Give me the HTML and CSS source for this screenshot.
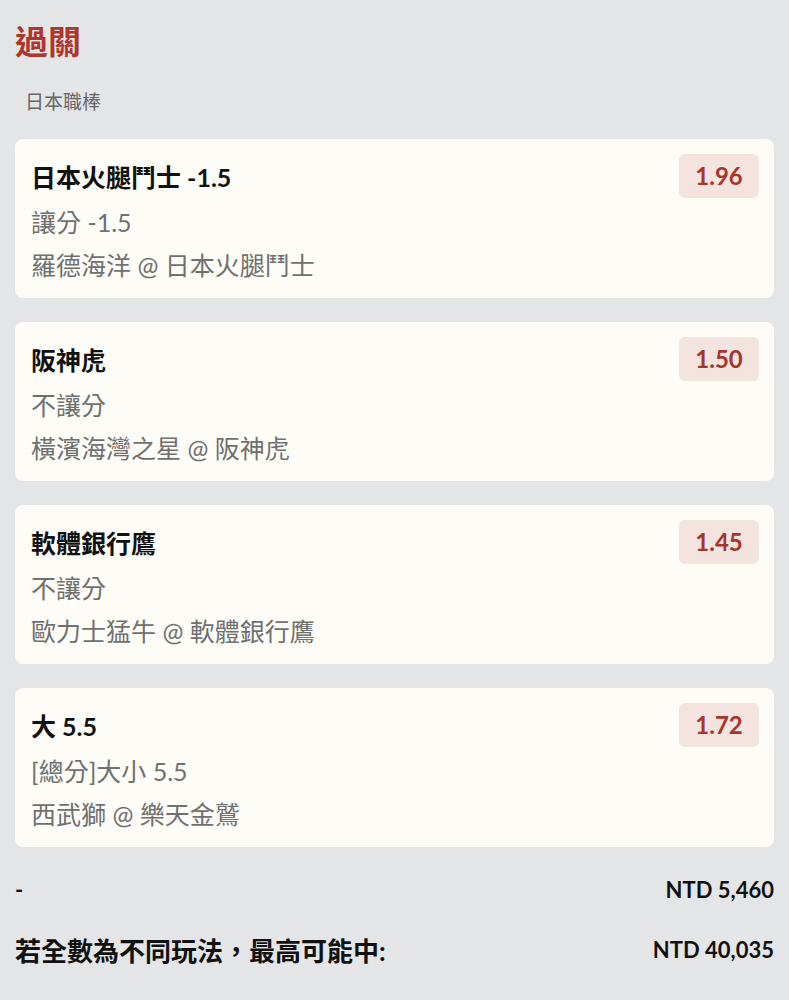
FILE: index.html
```html
<!DOCTYPE html>
<html lang="zh-Hant">
<head>
    <meta charset="UTF-8">
    <meta name="viewport" content="width=device-width, initial-scale=1.0">
    <title>過關</title>
    <link rel="stylesheet" href="styles.css">
</head>
<body>
    <h1 class="title">過關</h1>
    <div class="league">日本職棒</div>

    <div class="bets">
        <div class="bet-card">
            <div class="bet-head">
                <span class="bet-name">日本火腿鬥士 -1.5</span>
                <span class="odds">1.96</span>
            </div>
            <div class="bet-line">讓分 -1.5</div>
            <div class="bet-line">羅德海洋 @ 日本火腿鬥士</div>
        </div>

        <div class="bet-card">
            <div class="bet-head">
                <span class="bet-name">阪神虎</span>
                <span class="odds">1.50</span>
            </div>
            <div class="bet-line">不讓分</div>
            <div class="bet-line">橫濱海灣之星 @ 阪神虎</div>
        </div>

        <div class="bet-card">
            <div class="bet-head">
                <span class="bet-name">軟體銀行鷹</span>
                <span class="odds">1.45</span>
            </div>
            <div class="bet-line">不讓分</div>
            <div class="bet-line">歐力士猛牛 @ 軟體銀行鷹</div>
        </div>

        <div class="bet-card">
            <div class="bet-head">
                <span class="bet-name">大 5.5</span>
                <span class="odds">1.72</span>
            </div>
            <div class="bet-line">[總分]大小 5.5</div>
            <div class="bet-line">西武獅 @ 樂天金鷲</div>
        </div>
    </div>

    <div class="summary">
        <div class="summary-row">
            <span>-</span>
            <span class="amount">NTD 5,460</span>
        </div>
        <div class="summary-row big">
            <span>若全數為不同玩法，最高可能中:</span>
            <span class="amount">NTD 40,035</span>
        </div>
    </div>
</body>
</html>
```

FILE: styles.css
```css
body {
    font-family: 'Lato', 'Noto Sans CJK TC', sans-serif;
    margin: 0;
    padding: 0 15px;
    background-color: #e4e5e7;
    color: #111;
}
.title {
    margin: 0;
    padding-top: 22px;
    font-size: 33px;
    line-height: 38px;
    font-weight: bold;
    color: #b0362b;
}
.league {
    margin-top: 28px;
    padding-left: 10px;
    font-size: 19px;
    line-height: 28px;
    color: #666;
}
.bets {
    margin-top: 23px;
    display: flex;
    flex-direction: column;
    gap: 24px;
}
.bet-card {
    background-color: #fdfcf6;
    border-radius: 8px;
    padding: 15px 15px 11px 16px;
}
.bet-head {
    display: flex;
    justify-content: space-between;
    align-items: center;
    height: 44px;
    margin-bottom: 3px;
}
.bet-name {
    font-size: 25px;
    font-weight: bold;
}
.odds {
    background-color: #f3e4df;
    color: #a8352b;
    border-radius: 6px;
    width: 80px;
    height: 44px;
    line-height: 44px;
    text-align: center;
    font-size: 24px;
    font-weight: bold;
}
.bet-line {
    font-size: 25px;
    line-height: 43px;
    color: #707070;
}
.summary {
    margin-top: 24px;
}
.summary-row {
    display: flex;
    justify-content: space-between;
    align-items: center;
    height: 36px;
    font-size: 22px;
    font-weight: bold;
}
.summary-row.big {
    margin-top: 24px;
    font-size: 26px;
}
.summary-row .amount {
    font-size: 22px;
}
```
